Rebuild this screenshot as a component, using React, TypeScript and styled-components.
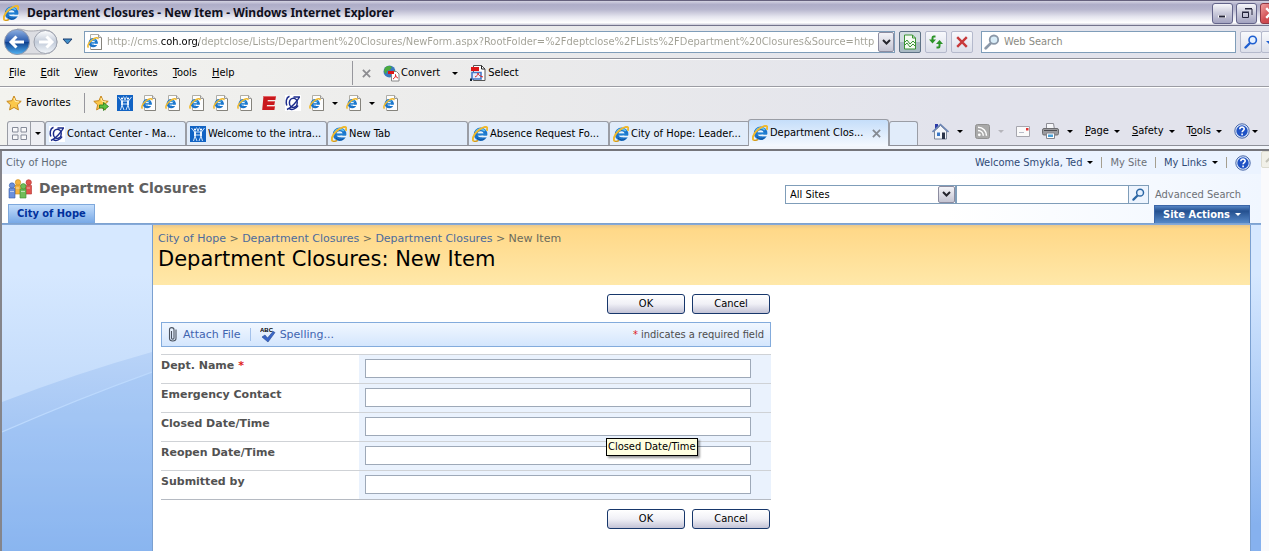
import React from "react";
import styled, { createGlobalStyle, css } from "styled-components";

const tahoma = `"DejaVu Sans Condensed", "DejaVu Sans", Tahoma, sans-serif`;
const verdana = `"DejaVu Sans", Verdana, sans-serif`;

const Global = createGlobalStyle`
  *, *::before, *::after { box-sizing: border-box; }
  body { margin: 0; overflow: hidden; background: #fff; }
  button, input, select { font: inherit; color: inherit; margin: 0; }
  a { color: inherit; text-decoration: none; }
  svg { display: block; flex: none; }
`;

/* ---------- window ---------- */

const Window = styled.div`
  display: flex;
  flex-direction: column;
  min-height: 100vh;
  overflow: hidden;
  font: 11px/16px ${tahoma};
  color: #000;
  background: linear-gradient(to right, #f3f3ef, #ebebeb 40%, #e2e3ec 75%);
`;

const TitleBar = styled.header`
  display: flex;
  align-items: center;
  height: 26px;
  padding: 0 0 0 3px;
  gap: 8px;
  border-top: 1px solid #65617d;
  border-bottom: 1px solid #73738c;
  background: linear-gradient(#d4d3e2, #aeadc8 15%, #b7b6ce 35%, #e4e4ee 65%, #fff 90%, #c8c8d6);
`;

const WindowTitle = styled.h1`
  flex: 1;
  margin: 0;
  font: bold 12px/20px "Noto Sans", "Trebuchet MS", sans-serif;
  white-space: nowrap;
  color: #10101c;
`;

const WindowButtons = styled.div`
  display: flex;
  gap: 3px;
  margin-right: -12px;
`;

const WindowButton = styled.button<{ $close?: boolean }>`
  display: grid;
  place-items: center;
  width: 21px;
  height: 21px;
  padding: 0;
  border: 1px solid ${(p) => (p.$close ? "#8e3844" : "#63648a")};
  border-radius: 3px;
  background: ${(p) =>
    p.$close
      ? "linear-gradient(135deg, #f0a0a0, #d24d52 50%, #b83a44)"
      : "linear-gradient(#f6f6fa, #c9c9da 50%, #a3a3c0)"};
`;

const AddressBar = styled.div`
  display: flex;
  align-items: center;
  height: 33px;
  padding-left: 4px;
  border-bottom: 1px solid #8f9099;
`;

const NavButtons = styled.div`
  display: flex;
  align-items: center;
  margin-right: 8px;
`;

const PlainButton = styled.button`
  display: inline-flex;
  align-items: center;
  gap: 4px;
  padding: 0;
  border: 0;
  background: none;
  white-space: nowrap;
`;

const AddressField = styled.label`
  display: flex;
  flex: 1;
  min-width: 0;
  align-items: center;
  height: 22px;
  padding-left: 2px;
  gap: 4px;
  border: 1px solid #7f9db9;
  background: #fff;
`;

const AddressInput = styled.input`
  flex: 1;
  min-width: 0;
  padding: 0;
  border: 0;
  outline: 0;
  font-size: 11px;
  color: transparent;
  background: linear-gradient(to right, #a09f94 54px, #000 54px, #000 92px, #a09f94 92px);
  background-clip: text;
  -webkit-background-clip: text;
`;

const DropArrow = styled.button`
  display: grid;
  place-items: center;
  width: 16px;
  height: 20px;
  padding: 0;
  border: 1px solid #8c8ca0;
  border-radius: 2px;
  background: linear-gradient(#f4f4f8, #c4c4d2);
`;

const ToolButton = styled.button<{ $on?: boolean }>`
  display: grid;
  place-items: center;
  width: 22px;
  height: 22px;
  padding: 0;
  margin-left: 4px;
  border: 1px solid ${(p) => (p.$on ? "#5e7286" : "#b4b9cc")};
  border-radius: 2px;
  background: ${(p) => (p.$on ? "linear-gradient(#d3dde2 50%, #a9bac4 50%)" : "linear-gradient(#f8f9fc, #dcdfea)")};
`;

const SearchOptions = styled(ToolButton)`
  width: 16px;
  margin: 0 -8px 0 -1px;
`;

const SearchField = styled.label`
  display: flex;
  align-items: center;
  width: 255px;
  height: 22px;
  margin-left: 8px;
  padding-left: 2px;
  gap: 4px;
  border: 1px solid #7f9db9;
  background: #fff;
`;

const SearchInput = styled.input`
  flex: 1;
  min-width: 0;
  padding: 0;
  border: 0;
  outline: 0;
  background: none;
  &::placeholder { color: #8b8b83; opacity: 1; }
`;

const MenuBar = styled.nav`
  display: flex;
  align-items: center;
  height: 28px;
  padding-left: 9px;
  border-top: 1px solid #fff;
  border-bottom: 1px solid #9b9ca3;
`;

const MenuList = styled.div`
  display: flex;
  gap: 15px;
  width: 343px;
`;

const Separator = styled.span<{ $height: number }>`
  width: 1px;
  height: ${(p) => p.$height}px;
  background: #97979d;
`;

const ConvertTools = styled.div`
  display: flex;
  align-items: center;
  gap: 12px;
  padding-left: 9px;
`;

const FavoritesBar = styled.div`
  display: flex;
  align-items: center;
  height: 31px;
  padding: 0 0 0 6px;
  gap: 8px;
  border-top: 1px solid #fff;
`;

const FavoritesButton = styled(PlainButton)`
  width: 70px;
`;

const TabStrip = styled.div`
  display: flex;
  align-items: flex-end;
  height: 28px;
  padding-left: 7px;
  border-bottom: 1px solid #8e9099;
`;

const tabFace = css`
  border: 1px solid #9a9da5;
  border-bottom: 0;
  border-radius: 3px 3px 0 0;
  background: #e1ecfa;
`;

const QuickTabs = styled.div`
  display: flex;
  width: 38px;
  height: 24px;
  ${tabFace}
  background: #eeeff3;
`;

const QuickButton = styled.button<{ $divided?: boolean }>`
  display: grid;
  place-items: center;
  flex: ${(p) => (p.$divided ? "0 0 14px" : "1")};
  padding: 0;
  border: 0;
  border-left: ${(p) => (p.$divided ? "1px solid #9a9da5" : "0")};
  background: none;
`;

const Tab = styled.button<{ $active?: boolean }>`
  display: flex;
  align-items: center;
  flex: 0 1 141px;
  min-width: 0;
  height: ${(p) => (p.$active ? 27 : 24)}px;
  padding: 0 7px 0 3px;
  gap: 2px;
  white-space: nowrap;
  ${tabFace}
  ${(p) =>
    p.$active &&
    css`
      margin: 0 0 -1px -2px;
      background: linear-gradient(#c5defa, #f4f8fe);
    `}
  & > :last-child:not(span) { margin-left: auto; }
`;

const NewTab = styled.button`
  width: 29px;
  height: 24px;
  padding: 0;
  ${tabFace}
`;

const CommandBar = styled.div`
  display: flex;
  flex: 1;
  align-items: center;
  height: 28px;
  margin-left: 14px;
  gap: 12px;
`;

const Command = styled(PlainButton)<{ $gap?: number }>`
  gap: ${(p) => p.$gap ?? 5}px;
`;

const ChromeEdge = styled.div`
  height: 5px;
  background: #f2f5fb;
  border-bottom: 2px solid #75757b;
`;

/* ---------- page ---------- */

const Viewport = styled.div`
  display: flex;
  flex: 1;
  border-left: 2px solid #85858b;
  background: #fff;
`;

const Site = styled.div`
  display: flex;
  flex: 1;
  min-width: 0;
  flex-direction: column;
`;

const ScrollBar = styled.div`
  width: 8px;
  overflow: hidden;
  background: #fafafc;
`;

const ScrollUp = styled.button`
  display: grid;
  place-items: center;
  width: 17px;
  height: 17px;
  padding: 0;
  border: 1px solid #dcdbd0;
  border-radius: 2px;
  background: #f1f0e8;
`;

const GlobalBar = styled.div`
  display: flex;
  align-items: center;
  height: 23px;
  padding: 0 10px 0 4px;
  color: #5f6a76;
  background: #ebf3ff;
`;

const GlobalLinks = styled.nav`
  display: flex;
  align-items: center;
  margin-left: auto;
  gap: 8px;
  color: #2f4a76;
`;

const GreyLink = styled.a`
  color: #6c7076;
`;

const Pipe = styled.span`
  width: 1px;
  height: 11px;
  background: #a59f90;
`;

const SiteHeader = styled.div`
  display: flex;
  justify-content: space-between;
  height: 49px;
  padding: 0 11px 0 6px;
  background: linear-gradient(to right, #fff 75%, #f0f6ff);
`;

const SiteIdentity = styled.div`
  display: flex;
  flex-direction: column;
  justify-content: space-between;
  align-items: flex-start;
`;

const SiteTitle = styled.h2`
  display: flex;
  align-items: center;
  margin: 4px 0 0;
  gap: 6px;
  font: bold 14px/21px ${verdana};
  color: #606060;
`;

const SiteTab = styled.a`
  height: 19px;
  padding: 0 8px;
  border: 1px solid #7ea8dc;
  border-bottom: 0;
  font-weight: bold;
  line-height: 17px;
  color: #00309c;
  background: linear-gradient(#c3ddfb, #77a8e6);
`;

const HeaderTools = styled.div`
  display: flex;
  flex-direction: column;
  justify-content: space-between;
  align-items: flex-end;
`;

const SearchRow = styled.form`
  display: flex;
  align-items: center;
  margin-top: 11px;
  padding-right: 9px;
`;

const ScopeBox = styled.div`
  display: flex;
  position: relative;
  width: 171px;
  height: 19px;
  border: 1px solid #7f9db9;
  background: #fff;
`;

const ScopeSelect = styled.select`
  flex: 1;
  padding: 0 20px 0 4px;
  border: 0;
  appearance: none;
  outline: 0;
  background: none;
`;

const ScopeArrow = styled.span`
  display: grid;
  place-items: center;
  position: absolute;
  right: 0;
  top: 0;
  width: 17px;
  height: 17px;
  border: 1px solid #8c8ca0;
  border-radius: 2px;
  background: linear-gradient(#f4f4f8, #c4c4d2);
  pointer-events: none;
`;

const QueryInput = styled.input`
  width: 173px;
  height: 19px;
  padding: 0 3px;
  border: 1px solid #7f9db9;
  outline: 0;
  background: #fff;
`;

const GoButton = styled.button`
  display: grid;
  place-items: center;
  width: 20px;
  height: 19px;
  margin-right: 6px;
  padding: 0;
  border: 1px solid #7f9db9;
  border-left: 0;
  background: #edf4fe;
`;

const SiteActions = styled.button`
  display: flex;
  align-items: center;
  justify-content: center;
  width: 96px;
  height: 18px;
  padding: 0;
  gap: 5px;
  border: 1px solid #3b66a8;
  border-bottom: 0;
  font-weight: bold;
  color: #fff;
  background: linear-gradient(#5584c4, #24508f 30%, #5588c8);
`;

const BlueRule = styled.div`
  height: 3px;
  background: linear-gradient(#7b9fcb, #8fb4e8);
`;

const Body = styled.div`
  display: flex;
  flex: 1;
  margin-top: -1px;
`;

const Sidebar = styled.aside`
  width: 150px;
  min-height: 326px;
  overflow: hidden;
  background: #8ab4ee;
`;

const RightStrip = styled.div`
  width: 11px;
  border-left: 1px solid #7ba0d0;
  background: linear-gradient(#d6e8ff 15%, #86b1ee 92%);
`;

const Main = styled.main`
  flex: 1;
  min-width: 0;
  border-left: 1px solid #7ba0d0;
  background: #fff;
`;

const TitleBand = styled.div`
  height: 60px;
  padding: 6px 5px 0;
  background: linear-gradient(#e9c88c, #ffd888 4px, #ffe8a9);
`;

const Crumbs = styled.nav`
  font: 11px/16px ${verdana};
  color: #6a6a5c;
  a { color: #4c6a9c; }
`;

const PageTitle = styled.h3`
  margin: 0;
  font: 21px/24px ${verdana};
`;

const Form = styled.form`
  width: 610px;
  margin: 9px 0 0 8px;
`;

const Actions = styled.div`
  display: flex;
  justify-content: flex-end;
  gap: 7px;
  padding-right: 1px;
`;

const ActionButton = styled.button`
  width: 78px;
  height: 20px;
  padding: 0;
  border: 1px solid #17376b;
  border-radius: 3px;
  line-height: 16px;
  background: linear-gradient(#fff, #f0f0f6 50%, #c3c3d6);
`;

const FormToolbar = styled.div`
  display: flex;
  align-items: center;
  height: 25px;
  margin: 8px 0 7px;
  padding: 0 6px;
  border: 1px solid #83abdc;
  color: #4d4d4d;
  background: linear-gradient(#f1f7ff, #d4e6fd);
`;

const ToolLink = styled.a`
  display: inline-flex;
  align-items: center;
  gap: 4px;
  font: 11px/16px ${verdana};
  color: #3f64b0;
`;

const ToolPipe = styled.span`
  width: 1px;
  height: 13px;
  margin: 0 9px;
  background: #a3c1ea;
`;

const Required = styled.span`
  color: #e02020;
`;

const Legend = styled.span`
  margin-left: auto;
`;

const Fields = styled.table`
  width: 100%;
  margin-bottom: 9px;
  border-collapse: separate;
  border-spacing: 0;
  border-bottom: 1px solid #b5bac2;
`;

const LabelCell = styled.th`
  width: 198px;
  height: 29px;
  padding: 3px 0 0;
  border-top: 1px solid #cfd2d6;
  vertical-align: top;
  text-align: left;
  font: bold 11px/16px ${verdana};
  color: #525252;
`;

const ControlCell = styled.td`
  position: relative;
  padding: 4px 20px 5px 6px;
  border-top: 1px solid #cfd2d6;
  background: #eaf2fd;
`;

const TextInput = styled.input`
  display: block;
  width: 100%;
  height: 19px;
  padding: 0 3px;
  border: 1px solid #9ea9b8;
  outline: 0;
  background: #fff;
`;

const Tooltip = styled.span`
  position: absolute;
  top: 25px;
  left: 247px;
  z-index: 1;
  padding: 0 1px;
  border: 1px solid #000;
  line-height: 16px;
  white-space: nowrap;
  color: #000;
  background: #ffffe1;
  box-shadow: 2px 2px 2px rgba(0, 0, 0, 0.4);
`;

/* ---------- icons ---------- */

const Caret = ({ color = "#000" }: { color?: string }) => (
  <svg width="6" height="3" viewBox="0 0 6 3" aria-hidden="true">
    <path d="M0 0h6L3 3z" fill={color} />
  </svg>
);

const Chevron = () => (
  <svg width="9" height="7" viewBox="0 0 9 7" aria-hidden="true">
    <path d="M1 1l3.500 3.500L8 1" fill="none" stroke="#25252d" strokeWidth="2" />
  </svg>
);

const Explorer = ({ size = 16 }: { size?: number }) => (
  <svg width={size} height={size} viewBox="0 0 16 16" aria-hidden="true">
    <circle cx="8.600" cy="8.300" r="4.900" fill="#e9f5fd" stroke="#1b73c8" strokeWidth="3.800" />
    <path d="M3.800 6.500A5.300 5.300 0 0 1 12.800 5" fill="none" stroke="#5cc0f4" strokeWidth="1.800" />
    <path d="M5 12a5.300 5.300 0 0 0 7.500.8" fill="none" stroke="#0d4f9c" strokeWidth="1" />
    <path d="M5 8.500h9.800" stroke="#1f7fd4" strokeWidth="2.200" />
    <path d="M9.500 9.700H16v1.700H9.500z" fill="#e9f3fc" />
    <path d="M2 15.300C-.8 13.800 1.800 7.800 6.500 4.200 10.500 1 14.800-.2 15.300 2.200c.1.800-.2 1.800-.7 2.600" fill="none" stroke="#efb92e" strokeWidth="2" />
    <path d="M2 15.300c1.300.4 2.900-.3 4-1" fill="none" stroke="#d09a20" strokeWidth="1.400" />
  </svg>
);

const PageIcon = () => (
  <svg width="16" height="16" viewBox="0 0 16 16" aria-hidden="true">
    <path d="M3.500.5h8l3 3v12h-11z" fill="#fdfdfd" stroke="#b0aea6" />
    <path d="M11.500.5v3h3" fill="#e4e4e4" stroke="#9a9a9a" />
    <path d="M14.500 4v11.500H4" fill="none" stroke="#85837c" />
    <circle cx="6.200" cy="8.700" r="3.300" fill="#e9f5fd" stroke="#1b73c8" strokeWidth="2.600" />
    <path d="M3.500 7.200A3.300 3.300 0 0 1 8.600 6.400" fill="none" stroke="#5cc0f4" strokeWidth="1.200" />
    <path d="M4 8.900h6.700" stroke="#1f7fd4" strokeWidth="1.500" />
    <path d="M7 9.800h4.500v1.200H7z" fill="#fdfdfd" />
    <path d="M1.500 13.600C-.3 12 2 8.500 5 6c3-2.500 6.300-3.200 6-.8" fill="none" stroke="#efb92e" strokeWidth="1.500" />
  </svg>
);

const Star = ({ plus }: { plus?: boolean }) => (
  <svg width="16" height="16" viewBox="0 0 16 16" aria-hidden="true">
    <path d="M8 1l2.100 4.700 5.100.6-3.800 3.500 1 5.100L8 12.400l-4.400 2.500 1-5.100L.8 6.300l5.100-.6z" fill="#fbc84a" stroke="#c8871c" />
    <path d="M8 3l1.400 3.500 3.600.4" fill="none" stroke="#fff0b8" />
    {plus && <path d="M6.500 10h4V7.500l5 4-5 4V13h-4z" fill="#5cc040" stroke="#267a1c" strokeWidth=".8" />}
  </svg>
);

const PeopleTile = () => (
  <svg width="16" height="16" viewBox="0 0 16 16" aria-hidden="true">
    <path fill="#1163c4" d="M0 0h16v16H0z" />
    <g fill="none" stroke="#d3e6fb" strokeWidth="1">
      <path d="M1.500 2l3 4h7l3-4M5 6v4l-1.500 5M5 10l2 5M11 6v4l1.500 5M11 10l-2 5M5 9h6" />
      <path d="M6.500 1.500L8 5l1.500-3.500" />
    </g>
    <path d="M4 5.500h2v4.500H4zM10 5.500h2v4.500h-2z" fill="#e8f3ff" />
    <circle cx="5" cy="3.600" r="1.100" fill="#fff" />
    <circle cx="11" cy="3.600" r="1.100" fill="#fff" />
  </svg>
);

const Orbit = () => (
  <svg width="16" height="16" viewBox="0 0 16 16" aria-hidden="true">
    <path fill="#fff" d="M0 0h16v16H0z" />
    <g fill="none" stroke="#1c2c8c">
      <ellipse cx="8.300" cy="7.800" rx="3.900" ry="4.600" strokeWidth="1.500" />
      <path d="M4.500 1.300C.8 2.500.8 7.500 1.800 10.500M2 14.500C6.500 12.500 12 6.500 14.500 2M15 2H8.500M4.500 14c3 1.200 6.500-.3 8.500-3.500" strokeWidth="1.500" />
    </g>
  </svg>
);

const RedBars = () => (
  <svg width="16" height="16" viewBox="0 0 16 16" aria-hidden="true">
    <path d="M2.500 1H15l-.6 4H6.800l-.2 1.200H14L13.300 10H6l-.2 1H14l-.6 4H1.200z" fill="#c9181d" />
    <path d="M2.500 1H15v1H2.500zM6.800 6.200H14v.9H6.800zM5.800 11H14v.9H5.800z" fill="#e46467" />
  </svg>
);

const NavCircles = () => (
  <svg width="55" height="28" viewBox="0 0 55 28" aria-hidden="true">
    <defs>
      <linearGradient id="back" x1="0" y1="0" x2="0" y2="1">
        <stop offset="0" stopColor="#8fb0e2" />
        <stop offset=".48" stopColor="#2a5cae" />
        <stop offset=".52" stopColor="#10418f" />
        <stop offset="1" stopColor="#52b4f4" />
      </linearGradient>
      <linearGradient id="fwd" x1="0" y1="0" x2="0" y2="1">
        <stop offset="0" stopColor="#fff" />
        <stop offset=".5" stopColor="#c2cbd9" />
        <stop offset="1" stopColor="#f3f7fb" />
      </linearGradient>
    </defs>
    <path d="M13 1C20 1 20 3 27 3S35 2 41 2a12 12 0 0 1 0 24H13z" fill="#dcdde2" stroke="#a9aab2" />
    <circle cx="13" cy="14" r="12.500" fill="url(#back)" stroke="#8d97ac" />
    <circle cx="41.500" cy="14" r="11.500" fill="url(#fwd)" stroke="#9da2ae" />
    <path d="M20 14H8M12.500 8.500L7 14l5.500 5.500" fill="none" stroke="#fff" strokeWidth="3" />
    <path d="M35 14h12M42.500 8.500L48 14l-5.500 5.500" fill="none" stroke="#fff" strokeWidth="3" />
  </svg>
);

const Magnifier = ({ size = 14, color = "#2b62c0", lens = "#e4f0ff" }: { size?: number; color?: string; lens?: string }) => (
  <svg width={size} height={size} viewBox="0 0 14 14" aria-hidden="true">
    <path d="M6 8L1.500 12.500" stroke={color} strokeWidth="2.400" strokeLinecap="round" />
    <circle cx="8.700" cy="5" r="3.700" fill={lens} stroke={color} strokeWidth="1.600" />
  </svg>
);

const HelpDisc = () => (
  <svg width="16" height="16" viewBox="0 0 16 16" aria-hidden="true">
    <circle cx="8" cy="8" r="7.200" fill="#dce8fa" stroke="#4a68a8" />
    <circle cx="8" cy="8" r="5.700" fill="#1f52c4" />
    <path d="M5.800 6.300C5.800 3.200 10.300 3.400 10.200 6c0 1.500-2.100 1.700-2.100 3.300M8.100 10.500v1.700" fill="none" stroke="#fff" strokeWidth="1.600" />
  </svg>
);

const Convert = () => (
  <svg width="17" height="17" viewBox="0 0 17 17" aria-hidden="true">
    <circle cx="6.500" cy="6.500" r="6" fill="#3a78c0" />
    <path d="M2 3c2-3 6-2 7-1L7 5 4 6 3 9C1 8 .5 5 2 3zM8 7l4-2v4l-3 2z" fill="#4caa3c" />
    <path d="M8.500 6.500h5l2.500 2.500v7H8.500z" fill="#fff" stroke="#888" />
    <path d="M5 6h6v3H5z" fill="#dd1616" />
    <path d="M10 14c2-1 3-3 2.500-4.500 0 2 1 3 2.500 3.500" fill="none" stroke="#d22" />
  </svg>
);

const SelectIcon = () => (
  <svg width="16" height="16" viewBox="0 0 16 16" aria-hidden="true">
    <path d="M3.500.5h8l3.500 3.500v11.500H3.500z" fill="#fff" stroke="#555" />
    <path d="M11.500.5v3.500H15" fill="none" stroke="#222" />
    <path d="M1 2h8v4H1z" fill="#dd1616" />
    <path d="M2 7.500h9V14H2z" fill="#e7eefb" stroke="#4779c8" strokeWidth="1.600" />
    <path d="M5 12c2-1 3-2 3-4 0 2 2 3 5 4" fill="none" stroke="#d22" />
    <path d="M0 13.500h2V16H0z" fill="#123" />
  </svg>
);

const CloseMark = ({ color, width = 2, size = 9 }: { color: string; width?: number; size?: number }) => (
  <svg width={size} height={size} viewBox="0 0 10 10" aria-hidden="true">
    <path d="M1 1l8 8M9 1L1 9" stroke={color} strokeWidth={width} />
  </svg>
);

const Home = () => (
  <svg width="17" height="17" viewBox="0 0 17 17" aria-hidden="true">
    <path d="M3 1h3v5H3z" fill="#2b3aa8" />
    <path d="M2.500 8v8h12V8l-6-5.500z" fill="#f4f6fa" stroke="#7c8698" />
    <path d="M.5 9l8-7.500L16.500 9" fill="none" stroke="#6d86b4" strokeWidth="1.600" />
    <path d="M5 9.500h3V13H5z" fill="#3a78c8" />
    <path d="M10 9.500h3V16h-3z" fill="#2a3348" />
  </svg>
);

const Rss = () => (
  <svg width="15" height="15" viewBox="0 0 15 15" aria-hidden="true">
    <rect x=".5" y=".5" width="14" height="14" rx="2" fill="#a9a9a9" stroke="#919191" />
    <circle cx="4.300" cy="10.800" r="1.400" fill="#fff" />
    <path d="M3 6.500c3 0 5.300 2.300 5.300 5.300M3 3.300c5 0 8.500 3.500 8.500 8.500" fill="none" stroke="#fff" strokeWidth="1.500" />
  </svg>
);

const Mail = () => (
  <svg width="14" height="11" viewBox="0 0 14 11" aria-hidden="true">
    <path d="M.5.5h13v10H.5z" fill="#fafafa" stroke="#a6a6ae" />
    <path d="M10 2h2.500v2.500H10z" fill="#e03434" />
    <path d="M3 6.500h5" stroke="#b9bcc8" />
  </svg>
);

const Printer = () => (
  <svg width="17" height="16" viewBox="0 0 17 16" aria-hidden="true">
    <path d="M4.500.5h7l1 6h-8z" fill="#f6f7fa" stroke="#8d8d95" />
    <rect x=".5" y="5.500" width="16" height="6.500" rx="1.500" fill="#9a9a9e" stroke="#6c6c70" />
    <path d="M2 7.500h13" stroke="#4c4c50" />
    <path d="M4.500 10h8v5.500h-8z" fill="#fff" stroke="#85858c" />
    <path d="M6 11.500h5v2.500H6z" fill="#4aa0d8" />
  </svg>
);

const People = () => (
  <svg width="25" height="20" viewBox="0 0 25 20" aria-hidden="true">
    <g fill="#f3b340" stroke="#c98918" strokeWidth=".6">
      <path d="M7 6h8v9H7z" />
      <circle cx="10" cy="3.300" r="2.700" />
    </g>
    <g fill="#e0544e" stroke="#b02f2c" strokeWidth=".6">
      <path d="M17 6.500h6.500V15H17z" />
      <circle cx="20.700" cy="3.400" r="2.700" />
    </g>
    <g fill="#6a90dc" stroke="#3459a6" strokeWidth=".6">
      <path d="M1 9.500h6V19H1z" />
      <circle cx="4" cy="6.500" r="2.700" />
    </g>
    <g fill="#70bd5a" stroke="#3b8a2c" strokeWidth=".6">
      <path d="M12 10h6v9h-6z" />
      <circle cx="15.300" cy="7.300" r="2.700" />
    </g>
    <path d="M2 12.500h4M13 12.500h4M8 9h3M19 9h3" stroke="#fff" opacity=".55" />
  </svg>
);

const Clip = () => (
  <svg width="11" height="15" viewBox="0 0 11 15" aria-hidden="true">
    <path d="M3.500 4v7c0 1.500 2.500 1.500 2.500 0V2.800C6-.1 1.500-.1 1.500 2.800v8.500c0 3.600 6.500 3.600 6.500 0V2.500" fill="none" stroke="#4b5360" strokeWidth="1.100" />
  </svg>
);

const Spelling = () => (
  <svg width="16" height="16" viewBox="0 0 16 16" aria-hidden="true">
    <text x="0" y="5" fontSize="6" fontWeight="bold" fontFamily="Liberation Sans, sans-serif" fill="#000">ABC</text>
    <path d="M2 10l3-2 2.500 3L13 4.500l2 1L8 15z" fill="#3a66c8" stroke="#27488f" strokeWidth=".6" />
  </svg>
);

const SidebarArt = () => (
  <svg width="150" height="100%" viewBox="0 0 150 326" preserveAspectRatio="none" aria-hidden="true">
    <defs>
      <linearGradient id="sky" x1="0" y1="0" x2="0" y2="1">
        <stop offset=".15" stopColor="#d6e8ff" />
        <stop offset=".5" stopColor="#c4dcfb" />
      </linearGradient>
      <linearGradient id="sea" x1="0" y1="0" x2="0" y2="1">
        <stop offset="0" stopColor="#b8d3f8" />
        <stop offset="1" stopColor="#88b3ee" />
      </linearGradient>
    </defs>
    <path d="M0 0h150v326H0z" fill="url(#sky)" />
    <path d="M0 177Q75 148 150 127v199H0z" fill="url(#sea)" />
    <path d="M0 207Q75 174 150 147v179H0z" fill="#8fbaf2" opacity=".25" />
    <path d="M0 207Q75 174 150 147" fill="none" stroke="#bcd9fd" strokeWidth="1.200" />
  </svg>
);

/* ---------- data ---------- */

const menus: [string, string, string][] = [
  ["", "F", "ile"],
  ["", "E", "dit"],
  ["", "V", "iew"],
  ["F", "a", "vorites"],
  ["", "T", "ools"],
  ["", "H", "elp"],
];

const tabs = [
  { title: "Contact Center - Ma...", icon: <Orbit /> },
  { title: "Welcome to the intra...", icon: <PeopleTile /> },
  { title: "New Tab", icon: <Explorer /> },
  { title: "Absence Request Fo...", icon: <Explorer /> },
  { title: "City of Hope: Leader...", icon: <Explorer /> },
];

const bookmarks = [
  { name: "Add to Favorites Bar", icon: <Star plus /> },
  { name: "Intranet", icon: <PeopleTile /> },
  { name: "Page 1", icon: <PageIcon /> },
  { name: "Page 2", icon: <PageIcon /> },
  { name: "Page 3", icon: <PageIcon /> },
  { name: "Page 4", icon: <PageIcon /> },
  { name: "Page 5", icon: <PageIcon /> },
  { name: "Expenses", icon: <RedBars /> },
  { name: "Contact Center", icon: <Orbit /> },
  { name: "Suggested Sites", icon: <PageIcon />, menu: true },
  { name: "Web Slices", icon: <PageIcon />, menu: true },
  { name: "Page 6", icon: <PageIcon /> },
];

const fields = [
  { id: "dept", label: "Dept. Name", required: true },
  { id: "contact", label: "Emergency Contact" },
  { id: "closed", label: "Closed Date/Time", tip: true },
  { id: "reopen", label: "Reopen Date/Time" },
  { id: "submitted", label: "Submitted by" },
];

const url =
  "http://cms.coh.org/deptclose/Lists/Department%20Closures/NewForm.aspx?RootFolder=%2Fdeptclose%2FLists%2FDepartment%20Closures&Source=http%3A%2F%2Fcms";

const FormActions = () => (
  <Actions>
    <ActionButton type="button">OK</ActionButton>
    <ActionButton type="button">Cancel</ActionButton>
  </Actions>
);

export default function App() {
  return (
    <Window>
      <Global />
      <TitleBar>
        <Explorer />
        <WindowTitle>Department Closures - New Item - Windows Internet Explorer</WindowTitle>
        <WindowButtons>
          <WindowButton aria-label="Minimize">
            <svg width="12" height="12" viewBox="0 0 12 12"><path d="M1.500 8.500h7v2h-7z" fill="#23233a" stroke="#fff" /><path d="M2 8.500h6v2H2z" fill="#23233a" /></svg>
          </WindowButton>
          <WindowButton aria-label="Restore">
            <svg width="12" height="12" viewBox="0 0 12 12">
              <path d="M4 2h7v6M1.500 5.500h6v5h-6zM1 5h7M4 1.500h7" fill="none" stroke="#23233a" />
            </svg>
          </WindowButton>
          <WindowButton $close aria-label="Close"><CloseMark color="#fff" size={12} /></WindowButton>
        </WindowButtons>
      </TitleBar>

      <AddressBar>
        <NavButtons>
          <PlainButton aria-label="Back and forward"><NavCircles /></PlainButton>
          <PlainButton aria-label="Recent pages">
            <svg width="17" height="8" viewBox="0 0 17 8"><path d="M4 1h9L8.500 6z" fill="#3f8fc8" stroke="#1d3f70" /></svg>
          </PlainButton>
        </NavButtons>
        <AddressField>
          <PageIcon />
          <AddressInput aria-label="Address" defaultValue={url} />
          <DropArrow aria-label="Show addresses"><Chevron /></DropArrow>
        </AddressField>
        <ToolButton $on aria-label="Compatibility view">
          <svg width="14" height="16" viewBox="0 0 14 16">
            <path d="M1.500 1h8l3 3v11h-11z" fill="#f4faf2" stroke="#3a9434" />
            <path d="M1 9l3-3 3 4 3-3 3 3M1 12l3-3 3 4 3-3 3 3M9.500 1v3h3" fill="none" stroke="#3a9434" />
          </svg>
        </ToolButton>
        <ToolButton aria-label="Refresh">
          <svg width="16" height="16" viewBox="0 0 16 16">
            <path d="M7.500 2.500H5.500Q4.500 2.500 4.500 4v3M8.500 13.500h2q1 0 1-1.500V9" fill="none" stroke="#2c9428" strokeWidth="2" />
            <path d="M1 5.500h7L4.500 9.500zM8 10h7l-3.500-4z" fill="#2c9428" />
          </svg>
        </ToolButton>
        <ToolButton aria-label="Stop"><CloseMark color="#c8393a" size={12} /></ToolButton>
        <SearchField>
          <Magnifier size={16} color="#8b98a8" lens="#d9edf8" />
          <SearchInput aria-label="Search" placeholder="Web Search" />
        </SearchField>
        <ToolButton aria-label="Go"><Magnifier color="#1f5fd0" /></ToolButton>
        <SearchOptions aria-label="Search options"><Caret color="#1f5fd0" /></SearchOptions>
      </AddressBar>

      <MenuBar>
        <MenuList>
          {menus.map(([a, b, c]) => (
            <PlainButton key={a + b + c}><span>{a}<u>{b}</u>{c}</span></PlainButton>
          ))}
        </MenuList>
        <Separator $height={24} />
        <ConvertTools>
          <PlainButton aria-label="Close toolbar"><CloseMark color="#8c8c90" /></PlainButton>
          <Command $gap={1}><Convert />Convert</Command>
          <PlainButton aria-label="Convert options"><Caret /></PlainButton>
          <Command $gap={2}><SelectIcon />Select</Command>
        </ConvertTools>
      </MenuBar>

      <FavoritesBar>
        <FavoritesButton><Star />Favorites</FavoritesButton>
        <Separator $height={20} />
        {bookmarks.map((b) => (
          <Command key={b.name} aria-label={b.name} $gap={7}>
            {b.icon}
            {b.menu && <Caret />}
          </Command>
        ))}
      </FavoritesBar>

      <TabStrip>
        <QuickTabs>
          <QuickButton aria-label="Quick tabs">
            <svg width="15" height="13" viewBox="0 0 15 13">
              <path d="M.5.5h5.500V5H.5zM9 .5h5.500V5H9zM.5 8h5.500v4.500H.5zM9 8h5.500v4.500H9z" fill="#f8f8fa" stroke="#858a98" />
            </svg>
          </QuickButton>
          <QuickButton $divided aria-label="Tab list"><Caret /></QuickButton>
        </QuickTabs>
        {tabs.map((t) => (
          <Tab key={t.title}>{t.icon}<span>{t.title}</span></Tab>
        ))}
        <Tab $active><Explorer /><span>Department Clos...</span><CloseMark color="#858a92" /></Tab>
        <NewTab aria-label="New tab" />
        <CommandBar>
          <Command aria-label="Home" $gap={8}><Home /><Caret /></Command>
          <Command aria-label="Feeds" $gap={8}><Rss /><Caret color="#b5b5bb" /></Command>
          <Command aria-label="Read mail"><Mail /></Command>
          <Command aria-label="Print" $gap={8}><Printer /><Caret /></Command>
          <Command><span><u>P</u>age</span><Caret /></Command>
          <Command><span><u>S</u>afety</span><Caret /></Command>
          <Command><span>T<u>o</u>ols</span><Caret /></Command>
          <Command aria-label="Help" $gap={2}><HelpDisc /><Caret /></Command>
        </CommandBar>
      </TabStrip>
      <ChromeEdge />

      <Viewport>
        <Site>
          <GlobalBar>
            <a href="#home">City of Hope</a>
            <GlobalLinks>
              <Command>Welcome Smykla, Ted<Caret /></Command>
              <Pipe />
              <GreyLink href="#mysite">My Site</GreyLink>
              <Pipe />
              <Command>My Links<Caret /></Command>
              <Pipe />
              <PlainButton aria-label="Help"><HelpDisc /></PlainButton>
            </GlobalLinks>
          </GlobalBar>
          <SiteHeader>
            <SiteIdentity>
              <SiteTitle><People />Department Closures</SiteTitle>
              <SiteTab href="#home">City of Hope</SiteTab>
            </SiteIdentity>
            <HeaderTools>
              <SearchRow>
                <ScopeBox>
                  <ScopeSelect aria-label="Search scope"><option>All Sites</option></ScopeSelect>
                  <ScopeArrow><Chevron /></ScopeArrow>
                </ScopeBox>
                <QueryInput aria-label="Search terms" />
                <GoButton type="button" aria-label="Search"><Magnifier size={13} color="#2b66a4" /></GoButton>
                <GreyLink href="#advanced">Advanced Search</GreyLink>
              </SearchRow>
              <SiteActions>Site Actions<Caret color="#fff" /></SiteActions>
            </HeaderTools>
          </SiteHeader>
          <BlueRule />
          <Body>
            <Sidebar><SidebarArt /></Sidebar>
            <Main>
              <TitleBand>
                <Crumbs>
                  <a href="#home">City of Hope</a> &gt; <a href="#closures">Department Closures</a> &gt;{" "}
                  <a href="#list">Department Closures</a> &gt; New Item
                </Crumbs>
                <PageTitle>Department Closures: New Item</PageTitle>
              </TitleBand>
              <Form>
                <FormActions />
                <FormToolbar>
                  <ToolLink href="#attach"><Clip />Attach File</ToolLink>
                  <ToolPipe />
                  <ToolLink href="#spelling"><Spelling />Spelling...</ToolLink>
                  <Legend><Required>*</Required> indicates a required field</Legend>
                </FormToolbar>
                <Fields>
                  <tbody>
                    {fields.map((f) => (
                      <tr key={f.id}>
                        <LabelCell scope="row">
                          <label htmlFor={f.id}>{f.label}</label>
                          {f.required && <Required> *</Required>}
                        </LabelCell>
                        <ControlCell>
                          <TextInput id={f.id} />
                          {f.tip && <Tooltip role="tooltip">{f.label}</Tooltip>}
                        </ControlCell>
                      </tr>
                    ))}
                  </tbody>
                </Fields>
                <FormActions />
              </Form>
            </Main>
            <RightStrip />
          </Body>
        </Site>
        <ScrollBar>
          <ScrollUp aria-label="Scroll up">
            <svg width="9" height="6" viewBox="0 0 9 6"><path d="M1 5l3.500-3.500L8 5" fill="none" stroke="#c4c3b8" strokeWidth="2" /></svg>
          </ScrollUp>
        </ScrollBar>
      </Viewport>
    </Window>
  );
}
